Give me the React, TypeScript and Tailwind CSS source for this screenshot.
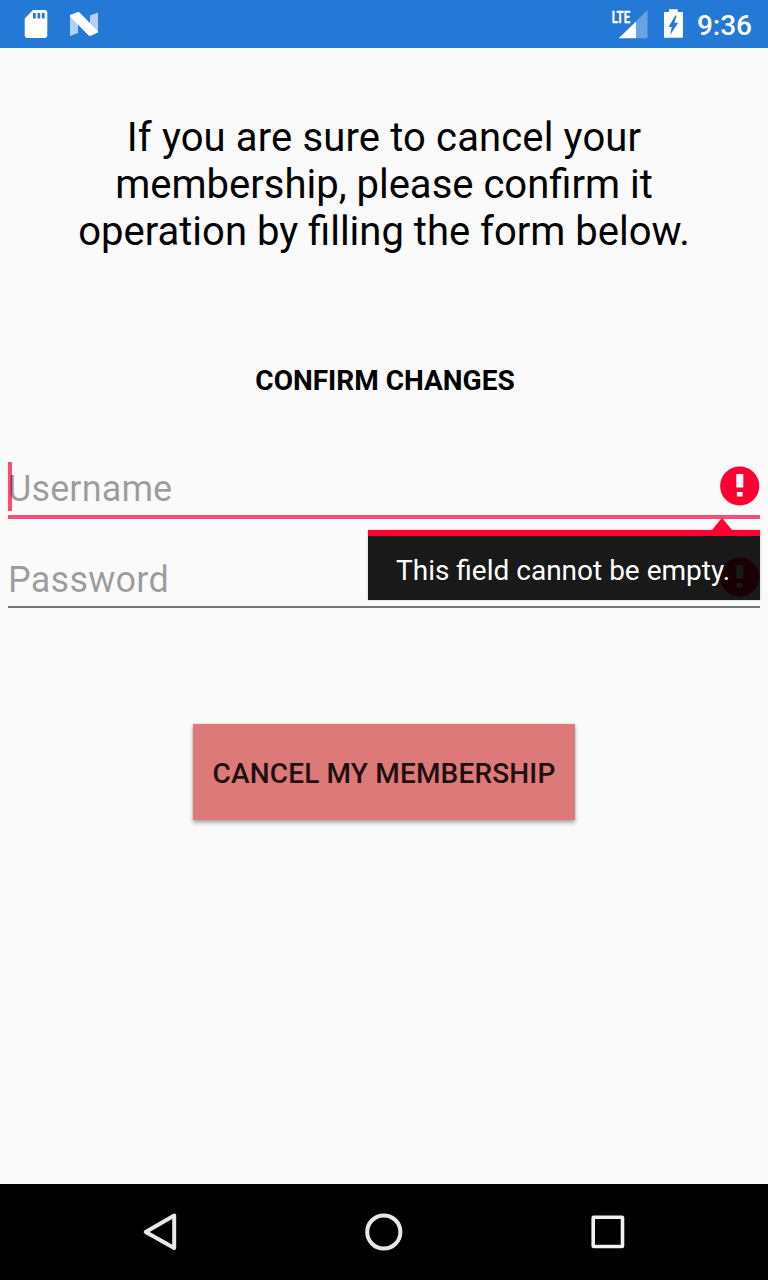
import React from 'react';

function StatusBar() {
  return (
    <header className="flex h-12 shrink-0 items-center justify-between bg-[#2478d6] text-white">
      <div className="flex h-full">
        <svg className="ml-6 h-12 w-6" viewBox="24 0 24 48" aria-label="Storage">
          <path fill="white" fillRule="evenodd" d="M33 10H45a2.3 2.3 0 0 1 2.3 2.3V35.6a2.3 2.3 0 0 1-2.3 2.3H27a2.3 2.3 0 0 1-2.3-2.3V18.4ZM33 13v5.6h2.8V13ZM37.5 13v5.6h2.7V13ZM41.8 13v5.6h2.8V13Z" />
        </svg>
        <svg className="ml-[21px] h-12 w-[31px]" viewBox="69 0 31 48" aria-label="Android N">
          <path fill="white" fillOpacity=".65" d="M70 14.5V36l8-3V21.5ZM98 12.5l-8 3V27l8 6Z" />
          <path fill="white" d="M70 15.1l7.2-2.9q1.4-.5 2.6.5L98 31.2v1.3L90.8 35.7q-1.2.5-2.4-.5L70 16.4Z" />
        </svg>
      </div>
      <div className="flex h-full items-center pr-4">
        <svg className="h-12 w-[38px]" viewBox="611 0 38 48" aria-label="LTE signal">
          <text x="611.7" y="22.7" fill="white" stroke="white" strokeWidth=".3" fontFamily="Roboto" fontSize="17" fontWeight="700" textLength="18.5" lengthAdjust="spacingAndGlyphs">LTE</text>
          <path fill="white" fillOpacity=".32" d="M647.5 10V38.3H636V21.5Z" />
          <path fill="white" d="M636 21.5V38.3H618.7Z" />
        </svg>
        <svg className="ml-[14px] h-12 w-[22px]" viewBox="663 0 22 48" aria-label="Battery charging">
          <path fill="white" fillRule="evenodd" d="M669 9.3h8.8v2.8h5.1v25.7H664V12.1h5ZM675.4 15.6l-6.8 11.4h3.2l-1.7 8 8-12.2h-3.7l2.3-7.2Z" />
        </svg>
        <span className="ml-3 translate-y-[1px] text-[28px] leading-[33px] font-medium">9:36</span>
      </div>
    </header>
  );
}

function ErrorIcon() {
  return (
    <svg className="h-10 w-10" viewBox="0 0 40 40" aria-label="Error">
      <circle cx="19.7" cy="20" r="19.6" fill="#ff0033" />
      <path fill="#fafafa" d="M16.3 8h7v13.6h-7ZM16.9 26h5.7v4.5h-5.7Z" />
    </svg>
  );
}

function ErrorPopup() {
  return (
    <div className="absolute top-[68px] right-0 z-10 w-[392px]">
      <div className="h-[70px] border-t-[6px] border-[#ff0033] bg-black/90 bg-clip-padding pt-[18px] pl-7 shadow-[0_0_2px_rgba(0,0,0,0.25)]">
        <p className="text-[28px] leading-[33px] whitespace-nowrap text-white">This field cannot be empty.</p>
      </div>
      <svg className="absolute -top-3 right-7 h-3 w-5" viewBox="0 0 20 12">
        <path d="M0 12 8.6 1.4Q10 0 11.4 1.4L20 12Z" fill="#ff0033" />
      </svg>
    </div>
  );
}

function NavigationBar() {
  return (
    <nav className="grid h-24 shrink-0 grid-cols-[112px_96px_128px_96px_128px_96px_112px] items-center bg-black">
      <svg className="col-start-2 size-24" viewBox="0 0 96 96" aria-label="Back">
        <path d="M62.2 31.5V64.1L33.7 47.9Z" fill="none" stroke="#e8e8e8" strokeWidth="4" strokeLinejoin="round" />
      </svg>
      <svg className="col-start-4 size-24" viewBox="0 0 96 96" aria-label="Home">
        <circle cx="47.8" cy="48" r="16.6" fill="none" stroke="#e8e8e8" strokeWidth="4" />
      </svg>
      <svg className="col-start-6 size-24" viewBox="0 0 96 96" aria-label="Recent apps">
        <rect x="33.2" y="33.2" width="29.3" height="29.3" rx=".5" fill="none" stroke="#f0f0f0" strokeWidth="3.6" strokeLinejoin="round" />
      </svg>
    </nav>
  );
}

export default function App() {
  return (
    <div className="flex h-[1280px] w-[768px] flex-col overflow-hidden bg-[#fafafa] font-['Roboto',sans-serif] text-black">
      <StatusBar />
      <main className="flex flex-1 flex-col px-2">
        <p className="mt-[66px] text-center text-[40px] leading-[47px]">
          <span className="tracking-[0.14px]">If you are sure to cancel your</span><br />membership, please confirm it<br />operation by filling the form below.
        </p>
        <h1 className="mt-[109px] pl-[2px] text-center text-[28px] leading-[33px] font-bold">CONFIRM CHANGES</h1>
        <form className="mt-[65px] flex flex-col items-center">
          <div className="relative flex h-[57px] w-full justify-between border-b-4 border-[#fb4c74]">
            <span className="absolute top-0 left-0 h-[49px] w-1 bg-[#fb4c74]" />
            <span className="relative mt-[6px] text-[36px] leading-[42px] tracking-[0.12px] text-black/38">Username</span>
            <span className="mt-1"><ErrorIcon /></span>
            <ErrorPopup />
          </div>
          <div className="mt-[34px] flex h-[55px] w-full justify-between border-b-2 border-[#757575]">
            <span className="mt-[6px] text-[36px] leading-[42px] tracking-[0.25px] text-black/38">Password</span>
            <span className="mt-1"><ErrorIcon /></span>
          </div>
          <button type="button" className="mt-[116px] h-24 w-[382px] bg-[#de7979] pt-[4px] text-[28px] font-medium tracking-[0.17px] text-[#1e1010] shadow-[0_3px_4px_rgba(0,0,0,0.3),0_0_2px_rgba(0,0,0,0.15)]">CANCEL MY MEMBERSHIP</button>
        </form>
      </main>
      <NavigationBar />
    </div>
  );
}
